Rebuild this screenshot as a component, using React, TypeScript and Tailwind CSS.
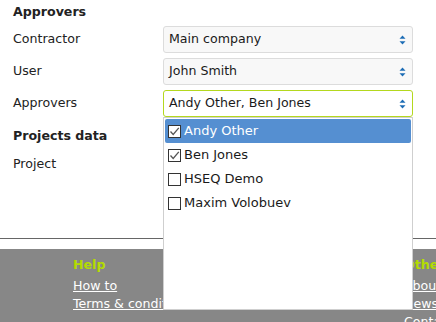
import { Fragment } from 'react'

const font = { fontFamily: '"DejaVu Sans", Verdana, sans-serif' }

function Arrows() {
  return (
    <svg width="7" height="10" viewBox="0 0 7 10" className="shrink-0">
      <path d="M3.5 0.5 L6.5 3.8 L0.5 3.8 Z" fill="#1c6cb5" />
      <path d="M3.5 9.5 L6.5 6.2 L0.5 6.2 Z" fill="#1c6cb5" />
    </svg>
  )
}

function Select({ value, active }: { value: string; active?: boolean }) {
  return (
    <div
      className={`flex h-[27px] w-[250px] items-center justify-between rounded-[3px] border pl-[5px] pr-[6px] ${
        active ? 'border-[#b4d81e] bg-white' : 'border-[#dcdcdc] bg-[#f8f8f8]'
      }`}
    >
      <span className="text-[#1a1a1a]">{value}</span>
      <Arrows />
    </div>
  )
}

function Check({ on }: { on: boolean }) {
  return (
    <span className="flex h-[13px] w-[13px] shrink-0 items-center justify-center border border-[#333] bg-white">
      {on && (
        <svg width="11" height="11" viewBox="0 0 11 11">
          <path d="M1.5 5.5 L4.2 8.5 L9.8 1.8" fill="none" stroke="#555" strokeWidth="1.3" />
        </svg>
      )}
    </span>
  )
}

const rows = [
  { label: 'Contractor', value: 'Main company' },
  { label: 'User', value: 'John Smith' },
  { label: 'Approvers', value: 'Andy Other, Ben Jones', active: true },
]

const options = [
  { name: 'Andy Other', on: true },
  { name: 'Ben Jones', on: true },
  { name: 'HSEQ Demo', on: false },
  { name: 'Maxim Volobuev', on: false },
]

export default function App() {
  return (
    <div className="relative h-[322px] w-[436px] overflow-hidden bg-white text-[12.6px] text-[#222]" style={font}>
      <div className="h-[239px] border-b border-[#666] pl-[13px]">
        <div className="pt-[4px] font-bold leading-[16px]">Approvers</div>
        <div className="mt-[6px] grid grid-cols-[150px_250px] gap-y-[5px]">
          {rows.map((r) => (
            <Fragment key={r.label}>
              <div className="flex items-center">{r.label}</div>
              <Select value={r.value} active={r.active} />
            </Fragment>
          ))}
        </div>
        <div className="mt-[11px] font-bold leading-[16px]">Projects data</div>
        <div className="mt-[12px] leading-[16px]">Project</div>
      </div>

      <div className="mt-[10px] flex h-[80px] bg-[#878787] pl-[73px] text-white">
        <div className="w-[331px] shrink-0 pt-[8px]">
          <div className="font-bold leading-[16px] text-[#b4dc00]">Help</div>
          <div className="mt-[4px] leading-[18px] underline">How to</div>
          <div className="leading-[18px] underline">Terms &amp; conditions</div>
        </div>
        <div className="shrink-0 pt-[8px]">
          <div className="font-bold leading-[16px] text-[#b4dc00]">Other</div>
          <div className="mt-[4px] leading-[18px] underline">About</div>
          <div className="leading-[18px] underline">News</div>
          <div className="leading-[18px]">Contact</div>
        </div>
      </div>

      <div className="absolute left-[163px] top-[117px] h-[193px] w-[250px] border border-[#cfcfcf] bg-white p-px">
        {options.map((o, i) => (
          <div
            key={o.name}
            className={`flex h-[24px] items-center gap-[3px] pl-[3px] ${
              i === 0 ? 'rounded-[2px] bg-[#558fd1] text-white' : 'text-[#1a1a1a]'
            }`}
          >
            <Check on={o.on} />
            <span className="text-[13px]">{o.name}</span>
          </div>
        ))}
      </div>
    </div>
  )
}
